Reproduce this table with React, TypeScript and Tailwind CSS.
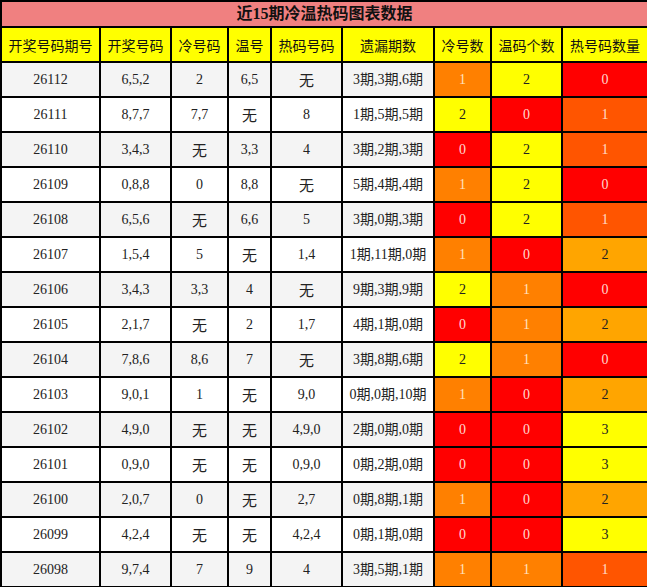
import React from "react";

type Row = [string, string, string, string, string, string, number, number, number];

const rows: Row[] = [
  ["26112", "6,5,2", "2", "6,5", "无", "3期,3期,6期", 1, 2, 0],
  ["26111", "8,7,7", "7,7", "无", "8", "1期,5期,5期", 2, 0, 1],
  ["26110", "3,4,3", "无", "3,3", "4", "3期,2期,3期", 0, 2, 1],
  ["26109", "0,8,8", "0", "8,8", "无", "5期,4期,4期", 1, 2, 0],
  ["26108", "6,5,6", "无", "6,6", "5", "3期,0期,3期", 0, 2, 1],
  ["26107", "1,5,4", "5", "无", "1,4", "1期,11期,0期", 1, 0, 2],
  ["26106", "3,4,3", "3,3", "4", "无", "9期,3期,9期", 2, 1, 0],
  ["26105", "2,1,7", "无", "2", "1,7", "4期,1期,0期", 0, 1, 2],
  ["26104", "7,8,6", "8,6", "7", "无", "3期,8期,6期", 2, 1, 0],
  ["26103", "9,0,1", "1", "无", "9,0", "0期,0期,10期", 1, 0, 2],
  ["26102", "4,9,0", "无", "无", "4,9,0", "2期,0期,0期", 0, 0, 3],
  ["26101", "0,9,0", "无", "无", "0,9,0", "0期,2期,0期", 0, 0, 3],
  ["26100", "2,0,7", "0", "无", "2,7", "0期,8期,1期", 1, 0, 2],
  ["26099", "4,2,4", "无", "无", "4,2,4", "0期,1期,0期", 0, 0, 3],
  ["26098", "9,7,4", "7", "9", "4", "3期,5期,1期", 1, 1, 1],
];

const headers = ["开奖号码期号", "开奖号码", "冷号码", "温号", "热码号码", "遗漏期数", "冷号数", "温码个数", "热号码数量"];
const widths = [99, 71, 57, 43, 71, 92, 57, 71, 86];

function cwClass(n: number) {
  if (n === 0) return "bg-[#ff0000] text-[#ffd8d0]";
  if (n === 1) return "bg-[#ff8000] text-[#ffe0c0]";
  return "bg-[#ffff00] text-[#222]";
}
function hotClass(n: number) {
  if (n === 0) return "bg-[#ff0000] text-[#ffd8d0]";
  if (n === 1) return "bg-[#ff5500] text-[#ffdcc8]";
  if (n === 2) return "bg-[#ffa500] text-[#222]";
  return "bg-[#ffff00] text-[#222]";
}

const serif = "font-['Liberation_Serif','Noto_Sans_CJK_SC',serif]";

function TextCell({ v }: { v: string }) {
  if (v === "无") {
    return (
      <td className="border-2 border-black text-center align-middle h-[35px] p-0 text-[15px] leading-[20px] font-['Noto_Sans_CJK_SC',sans-serif] text-[#222]">
        无
      </td>
    );
  }
  return (
    <td className={`border-2 border-black text-center align-middle h-[35px] p-0 text-[14px] leading-[20px] ${serif} text-[#222]`}>{v}</td>
  );
}

export default function App() {
  return (
    <div className="w-[647px] h-[587px] bg-white overflow-hidden">
      <table className="w-[647px] table-fixed border-collapse">
        <colgroup>
          {widths.map((w, i) => (
            <col key={i} style={{ width: w }} />
          ))}
        </colgroup>
        <tbody>
          <tr>
            <td
              colSpan={9}
              className={`border-2 border-black bg-[#f08080] text-center align-middle h-[26px] p-0 text-[16px] leading-[20px] font-bold text-[#111] ${serif}`}
            >
              近15期冷温热码图表数据
            </td>
          </tr>
          <tr>
            {headers.map((h) => (
              <td
                key={h}
                className="border-2 border-black bg-[#ffff00] text-center align-middle h-[35px] p-0 text-[14px] leading-[20px] text-[#111] font-['Noto_Sans_CJK_SC',sans-serif] whitespace-nowrap"
              >
                {h}
              </td>
            ))}
          </tr>
          {rows.map((r, i) => (
            <tr key={r[0]} className={i % 2 === 0 ? "bg-[#f4f4f4]" : "bg-white"}>
              <TextCell v={r[0]} />
              <TextCell v={r[1]} />
              <TextCell v={r[2]} />
              <TextCell v={r[3]} />
              <TextCell v={r[4]} />
              <td className={`border-2 border-black text-center align-middle h-[35px] p-0 text-[14px] leading-[20px] whitespace-nowrap ${serif} text-[#222]`}>
                {r[5]}
              </td>
              <td className={`border-2 border-black text-center align-middle h-[35px] p-0 text-[14px] leading-[20px] ${serif} ${cwClass(r[6])}`}>
                {r[6]}
              </td>
              <td className={`border-2 border-black text-center align-middle h-[35px] p-0 text-[14px] leading-[20px] ${serif} ${cwClass(r[7])}`}>
                {r[7]}
              </td>
              <td className={`border-2 border-black text-center align-middle h-[35px] p-0 text-[14px] leading-[20px] ${serif} ${hotClass(r[8])}`}>
                {r[8]}
              </td>
            </tr>
          ))}
        </tbody>
      </table>
    </div>
  );
}
